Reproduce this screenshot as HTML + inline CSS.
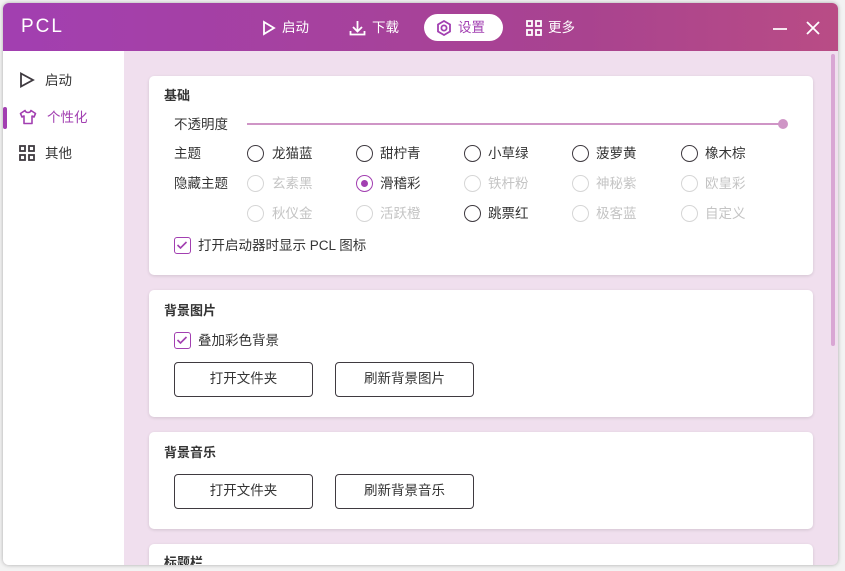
<!DOCTYPE html>
<html><head><meta charset="utf-8"><style>
*{margin:0;padding:0;box-sizing:border-box}
body{width:845px;height:571px;background:#f3f3f3;font-family:"Liberation Sans","Noto Sans CJK SC",sans-serif;font-size:13px;color:#343434;position:relative;overflow:hidden;line-height:17px}
.win{position:absolute;left:3px;top:3px;width:835px;height:562px;border-radius:6px;overflow:hidden;background:#f0dfee;box-shadow:0 0 4px rgba(0,0,0,.3)}
.title{position:absolute;left:0;top:0;width:835px;height:48px;background:linear-gradient(90deg,#a23fb1,#a9438f 70%,#b94c85)}
.logo{position:absolute;left:18px;top:14px;color:#fff;font-size:19px;letter-spacing:2px;line-height:20px}
.nav{position:absolute;top:11px;height:27px;color:#fff;font-size:13.5px;display:flex;align-items:center;gap:6px}
.pill{background:#fff;color:#a23fb1;border-radius:14px;padding:0 12px 0 12px}
.side{position:absolute;left:0;top:48px;width:121px;height:514px;background:#fff}
.si{position:absolute;left:16px;font-size:13.5px;display:flex;align-items:center;gap:10px;height:18px}
.card{position:absolute;left:146px;width:664px;background:#fff;border-radius:5px;box-shadow:0 1px 3px rgba(0,0,0,.12)}
.h{position:absolute;left:15px;font-weight:bold;font-size:13px}
.t{position:absolute;font-size:13.5px}
.r{position:absolute;width:17px;height:17px;border:1.5px solid #3f3a40;border-radius:50%}
.r.d{border-color:#d6d6d6}
.lab{position:absolute;font-size:13.5px}
.lab.d{color:#c4c4c4}
.btn{position:absolute;width:139px;height:35px;border:1px solid #3f3a40;border-radius:4px;text-align:center;line-height:31px;font-size:13.5px}
.cb{position:absolute;width:17px;height:17px;border:1.5px solid #a23fb1;border-radius:3px}
</style></head><body>
<div class="win">
<div class="title">
<div class="logo">PCL</div>
<div class="nav" style="left:259px"><svg width="14" height="16"><path d="M2 2 L12 8 L2 14 Z" fill="none" stroke="#fff" stroke-width="1.8"/></svg>启动</div>
<div class="nav" style="left:346px"><svg width="17" height="16"><path d="M8.5 1v10M4 7l4.5 4.5L13 7M1.5 11v3.5h14V11" fill="none" stroke="#fff" stroke-width="1.8"/></svg>下载</div>
<div class="nav pill" style="left:421px;width:79px"><svg width="16" height="16"><path d="M8 1l6 3.5v7L8 15l-6-3.5v-7z" fill="none" stroke="#a23fb1" stroke-width="1.8"/><circle cx="8" cy="8" r="2.6" fill="none" stroke="#a23fb1" stroke-width="1.8"/></svg>设置</div>
<div class="nav" style="left:523px"><svg width="16" height="16" fill="none" stroke="#fff" stroke-width="1.8"><rect x="1" y="1" width="5" height="5"/><rect x="10" y="1" width="5" height="5"/><rect x="1" y="10" width="5" height="5"/><rect x="10" y="10" width="5" height="5"/></svg>更多</div>
<svg style="position:absolute;left:770px;top:18px" width="50" height="14" stroke="#fff" stroke-width="1.8"><path d="M0 8h14"/><path d="M34 1l12 12M46 1L34 13"/></svg>
</div>
<div class="side">
<div class="si" style="top:20px"><svg width="16" height="16"><path d="M2 1.5L14 8 2 14.5z" fill="none" stroke="#3f3a40" stroke-width="1.8"/></svg>启动</div>
<div style="position:absolute;left:0;top:56px;width:4px;height:22px;background:#a23fb1;border-radius:2px"></div>
<div class="si" style="top:57px;color:#a23fb1"><svg width="18" height="16"><path d="M6 1.5L1.5 4.5l1.5 3.5 2-1v7.5h8V7l2 1 1.5-3.5L12 1.5c-.5 1.5-1.5 2-3 2s-2.5-.5-3-2z" fill="none" stroke="#a23fb1" stroke-width="1.6" stroke-linejoin="round"/></svg>个性化</div>
<div class="si" style="top:93px"><svg width="16" height="16" fill="none" stroke="#3f3a40" stroke-width="1.8"><rect x="1" y="1" width="5" height="5"/><rect x="10" y="1" width="5" height="5"/><rect x="1" y="10" width="5" height="5"/><rect x="10" y="10" width="5" height="5"/></svg>其他</div>
</div>
<div style="position:absolute;left:828px;top:51px;width:4px;height:292px;background:#d9a6d4;border-radius:2px"></div>

<div class="card" style="top:73px;height:199px">
<div class="h" style="top:11px">基础</div>
<div class="t" style="left:25px;top:40px">不透明度</div>
<div style="position:absolute;left:98px;top:47px;width:536px;height:2px;background:#cf95c6"></div>
<div style="position:absolute;left:629px;top:43px;width:10px;height:10px;border-radius:50%;background:#cf95c6"></div>
<div class="t" style="left:25px;top:69px">主题</div>
<div class="t" style="left:25px;top:99px">隐藏主题</div>
<div class="r" style="left:98px;top:69px"></div><div class="lab" style="left:123px;top:69px">龙猫蓝</div>
<div class="r" style="left:207px;top:69px"></div><div class="lab" style="left:231px;top:69px">甜柠青</div>
<div class="r" style="left:315px;top:69px"></div><div class="lab" style="left:339px;top:69px">小草绿</div>
<div class="r" style="left:423px;top:69px"></div><div class="lab" style="left:447px;top:69px">菠萝黄</div>
<div class="r" style="left:532px;top:69px"></div><div class="lab" style="left:556px;top:69px">橡木棕</div>
<div class="r d" style="left:98px;top:99px"></div><div class="lab d" style="left:123px;top:99px">玄素黑</div>
<div class="r" style="left:207px;top:99px;border-color:#a23fb1"><div style="position:absolute;left:3.5px;top:3.5px;width:7px;height:7px;border-radius:50%;background:#a23fb1"></div></div><div class="lab" style="left:231px;top:99px">滑稽彩</div>
<div class="r d" style="left:315px;top:99px"></div><div class="lab d" style="left:339px;top:99px">铁杆粉</div>
<div class="r d" style="left:423px;top:99px"></div><div class="lab d" style="left:447px;top:99px">神秘紫</div>
<div class="r d" style="left:532px;top:99px"></div><div class="lab d" style="left:556px;top:99px">欧皇彩</div>
<div class="r d" style="left:98px;top:129px"></div><div class="lab d" style="left:123px;top:129px">秋仪金</div>
<div class="r d" style="left:207px;top:129px"></div><div class="lab d" style="left:231px;top:129px">活跃橙</div>
<div class="r" style="left:315px;top:129px"></div><div class="lab" style="left:339px;top:129px">跳票红</div>
<div class="r d" style="left:423px;top:129px"></div><div class="lab d" style="left:447px;top:129px">极客蓝</div>
<div class="r d" style="left:532px;top:129px"></div><div class="lab d" style="left:556px;top:129px">自定义</div>
<div class="cb" style="left:25px;top:161px"><svg width="14" height="14" style="position:absolute;left:0;top:0"><path d="M2.5 7l3 3 6-6" fill="none" stroke="#a23fb1" stroke-width="1.6"/></svg></div>
<div class="lab" style="left:49px;top:161px">打开启动器时显示 PCL 图标</div>
</div>

<div class="card" style="top:287px;height:127px">
<div class="h" style="top:12px">背景图片</div>
<div class="cb" style="left:25px;top:42px"><svg width="14" height="14" style="position:absolute;left:0;top:0"><path d="M2.5 7l3 3 6-6" fill="none" stroke="#a23fb1" stroke-width="1.6"/></svg></div>
<div class="lab" style="left:49px;top:42px">叠加彩色背景</div>
<div class="btn" style="left:25px;top:72px">打开文件夹</div>
<div class="btn" style="left:186px;top:72px">刷新背景图片</div>
</div>

<div class="card" style="top:429px;height:97px">
<div class="h" style="top:12px">背景音乐</div>
<div class="btn" style="left:25px;top:42px">打开文件夹</div>
<div class="btn" style="left:186px;top:42px">刷新背景音乐</div>
</div>

<div class="card" style="top:541px;height:40px">
<div class="h" style="top:10px">标题栏</div>
</div>
</div>
</body></html>
